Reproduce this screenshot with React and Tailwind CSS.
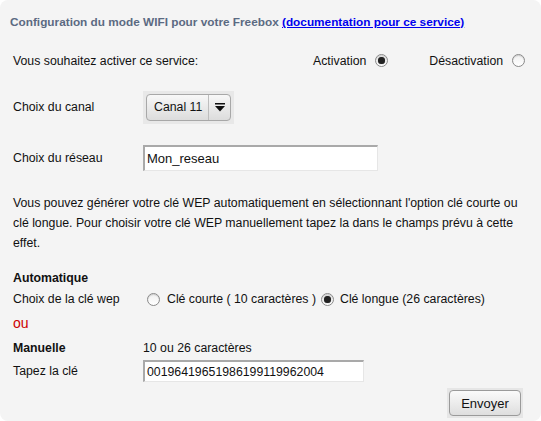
import React from "react";

function Radio({ checked }) {
  return (
    <span className="inline-flex h-[13px] w-[13px] shrink-0 items-center justify-center rounded-full border border-[#8a8a8a] bg-gradient-to-b from-[#f0f0f0] to-[#ffffff] shadow-[inset_0_1px_1px_rgba(0,0,0,0.15)]">
      {checked && <span className="block h-[7px] w-[7px] rounded-full bg-[#222] shadow-[0_0_1px_#555]" />}
    </span>
  );
}

export default function App() {
  return (
    <div className="w-[541px] h-[421px] bg-white overflow-hidden">
      <div
        className="h-full w-full rounded-[8px] bg-[#f4f4f4] text-[12.3px] text-[#111] leading-none"
        style={{ fontFamily: '"Liberation Sans", Arial, sans-serif' }}
      >
        <div className="pl-[10px] pt-[17px] text-[11.8px] font-bold text-[#5b6a82] whitespace-nowrap">
          Configuration du mode WIFI pour votre Freebox{" "}
          <a className="text-[#0000ee] underline">(documentation pour ce service)</a>
        </div>

        <div className="flex items-center pl-[13px] pt-[23px] h-[41px]">
          <span className="w-[300px]">Vous souhaitez activer ce service:</span>
          <span className="flex items-center gap-[9px]">
            Activation <Radio checked />
          </span>
          <span className="flex items-center gap-[9px] ml-[41px]">
            Désactivation <Radio />
          </span>
        </div>

        <div className="flex items-center pl-[13px] mt-[21px] h-[33px]">
          <span className="w-[130px]">Choix du canal</span>
          <div className="p-[3px] bg-[#e8e8e8]">
            <div className="flex h-[27px] items-stretch rounded-[4px] border border-[#a8a8a8] bg-gradient-to-b from-[#f8f8f8] to-[#dcdcdc]">
              <span className="flex items-center pl-[7px] pr-[6px]">Canal 11</span>
              <span className="flex w-[22px] items-center justify-center border-l border-[#bdbdbd]">
                <svg width="10" height="9" viewBox="0 0 10 9">
                  <rect x="0" y="0" width="10" height="1.5" fill="#111" />
                  <path d="M0 3 L10 3 L5 8.5 Z" fill="#111" />
                </svg>
              </span>
            </div>
          </div>
        </div>

        <div className="flex items-center pl-[13px] mt-[21px] h-[26px]">
          <span className="w-[130px]">Choix du réseau</span>
          <div className="flex h-[26px] w-[235px] items-center border-t-[2px] border-l-[2px] border-b border-r border-t-[#a9a9a9] border-l-[#a9a9a9] border-b-[#e6e6e6] border-r-[#e6e6e6] bg-white pl-[2px] text-[13px]">
            Mon_reseau
          </div>
        </div>

        <p className="pl-[13px] pr-[10px] mt-[22px] leading-[20px] whitespace-nowrap">
          Vous pouvez générer votre clé WEP automatiquement en sélectionnant l'option clé courte ou
          <br />
          clé longue. Pour choisir votre clé WEP manuellement tapez la dans le champs prévu à cette
          <br />
          effet.
        </p>

        <div className="pl-[13px] mt-[19px] font-bold">Automatique</div>

        <div className="flex items-center pl-[13px] mt-[7px] h-[16px] whitespace-nowrap">
          <span className="w-[134px]">Choix de la clé wep</span>
          <span className="flex items-center gap-[7px]">
            <Radio /> Clé courte ( 10 caractères )
          </span>
          <span className="flex items-center gap-[6px] ml-[5px]">
            <Radio checked /> Clé longue (26 caractères)
          </span>
        </div>

        <div className="pl-[13px] mt-[9px] text-[14px] text-[#cc0000]">ou</div>

        <div className="flex items-center pl-[13px] mt-[12px]">
          <span className="w-[130px] font-bold">Manuelle</span>
          <span>10 ou 26 caractères</span>
        </div>

        <div className="flex items-center pl-[13px] mt-[6px] h-[22px]">
          <span className="w-[130px]">Tapez la clé</span>
          <div className="flex h-[22px] w-[221px] items-center border-t-[2px] border-l-[2px] border-b border-r border-t-[#a9a9a9] border-l-[#a9a9a9] border-b-[#e6e6e6] border-r-[#e6e6e6] bg-white pl-[2px]">
            00196419651986199119962004
          </div>
        </div>

        <div className="flex justify-end pr-[18px] mt-[6px]">
          <div className="p-[2px] bg-[#e6e6e6]">
            <button className="h-[26px] w-[72px] rounded-[4px] border border-[#9a9a9a] bg-gradient-to-b from-[#fafafa] to-[#dedede] text-[13px] text-[#111]">
              Envoyer
            </button>
          </div>
        </div>
      </div>
    </div>
  );
}
